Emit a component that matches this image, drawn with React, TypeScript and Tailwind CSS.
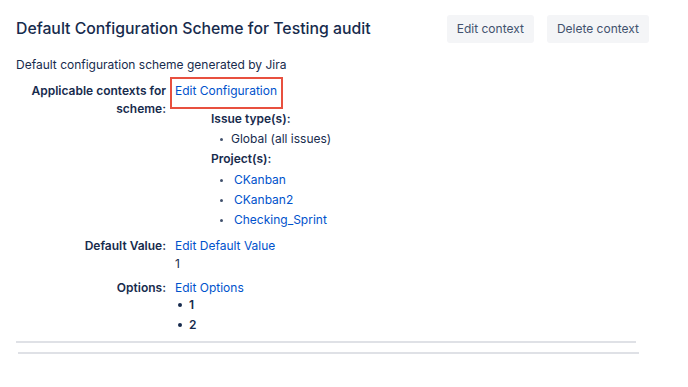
import React from 'react';

const ink = 'text-[#172B4D]';

function Dot({ big }: { big?: boolean }) {
  return (
    <span
      className={
        big
          ? 'inline-block w-[4px] h-[4px] rounded-full bg-[#172B4D] shrink-0'
          : 'inline-block w-[3px] h-[3px] rounded-full bg-[#42526E] shrink-0'
      }
    />
  );
}

function Row({
  label,
  children,
  labelPad = 'pt-0',
}: {
  label: React.ReactNode;
  children: React.ReactNode;
  labelPad?: string;
}) {
  return (
    <div className="flex">
      <div
        className={`w-[159px] shrink-0 pr-[9px] text-right font-semibold leading-[18px] ${ink} ${labelPad}`}
      >
        {label}
      </div>
      <div className="flex-1 flex flex-col">{children}</div>
    </div>
  );
}

export default function App() {
  return (
    <div
      className={`w-[688px] h-[387px] bg-white text-[12px] ${ink}`}
      style={{ fontFamily: 'Inter, "Noto Sans", sans-serif' }}
    >
      {/* header */}
      <div className="flex items-center justify-between pl-4 pr-[39px] pt-[15px]">
        <h1 className="text-[15.8px] font-medium leading-[28px] text-[#172B4D]">
          Default Configuration Scheme for Testing audit
        </h1>
        <div className="flex gap-[13px]">
          <button className="h-[28px] px-[10px] rounded-[3px] bg-[#F4F5F7] text-[12px] text-[#42526E]">
            Edit context
          </button>
          <button className="h-[28px] px-[10px] rounded-[3px] bg-[#F4F5F7] text-[12px] text-[#42526E]">
            Delete context
          </button>
        </div>
      </div>

      <p className="pl-4 mt-[13px] leading-[18px]">Default configuration scheme generated by Jira</p>

      <div className="pl-4 mt-[3px] flex flex-col">
        <Row
          labelPad="pt-[5px]"
          label={
            <>
              Applicable contexts for
              <br />
              scheme:
            </>
          }
        >
          <div className="self-start -ml-[5px] border-2 border-[#E8503F] pl-[3px] pr-[4px] pt-[3px] pb-[7px] leading-[18px]">
            <a className="text-[#0052CC]">Edit Configuration</a>
          </div>
          <div className="pl-[36px] leading-5">
            <div className="font-semibold">Issue type(s):</div>
            <div className="flex items-center gap-[8px] pl-[9px]">
              <Dot />
              <span>Global (all issues)</span>
            </div>
            <div className="font-semibold">Project(s):</div>
            <div className="mt-px">
              {['CKanban', 'CKanban2', 'Checking_Sprint'].map((p) => (
                <div key={p} className="flex items-center gap-[11px] pl-[9px]">
                  <Dot />
                  <a className="text-[#0052CC]">{p}</a>
                </div>
              ))}
            </div>
          </div>
        </Row>

        <div className="mt-[7px]">
          <Row label="Default Value:">
            <div className="leading-[18px]">
              <a className="text-[#0052CC]">Edit Default Value</a>
            </div>
            <div className={`leading-[18px] ${ink}`}>1</div>
          </Row>
        </div>

        <div className="mt-[6px]">
          <Row label="Options:">
            <div className="leading-[18px]">
              <a className="text-[#0052CC]">Edit Options</a>
            </div>
            <div className="-mt-[2px]">
              {['1', '2'].map((o) => (
                <div key={o} className="flex items-center gap-[7px] pl-[3px] leading-5 font-semibold">
                  <Dot big />
                  <span>{o}</span>
                </div>
              ))}
            </div>
          </Row>
        </div>
      </div>

      <div className="ml-4 w-[620px] h-[2px] bg-[#DFE1E6] mt-[6px]" />
      <div className="ml-[18px] w-[621px] h-[2px] bg-[#DFE1E6] mt-[9px]" />
    </div>
  );
}
